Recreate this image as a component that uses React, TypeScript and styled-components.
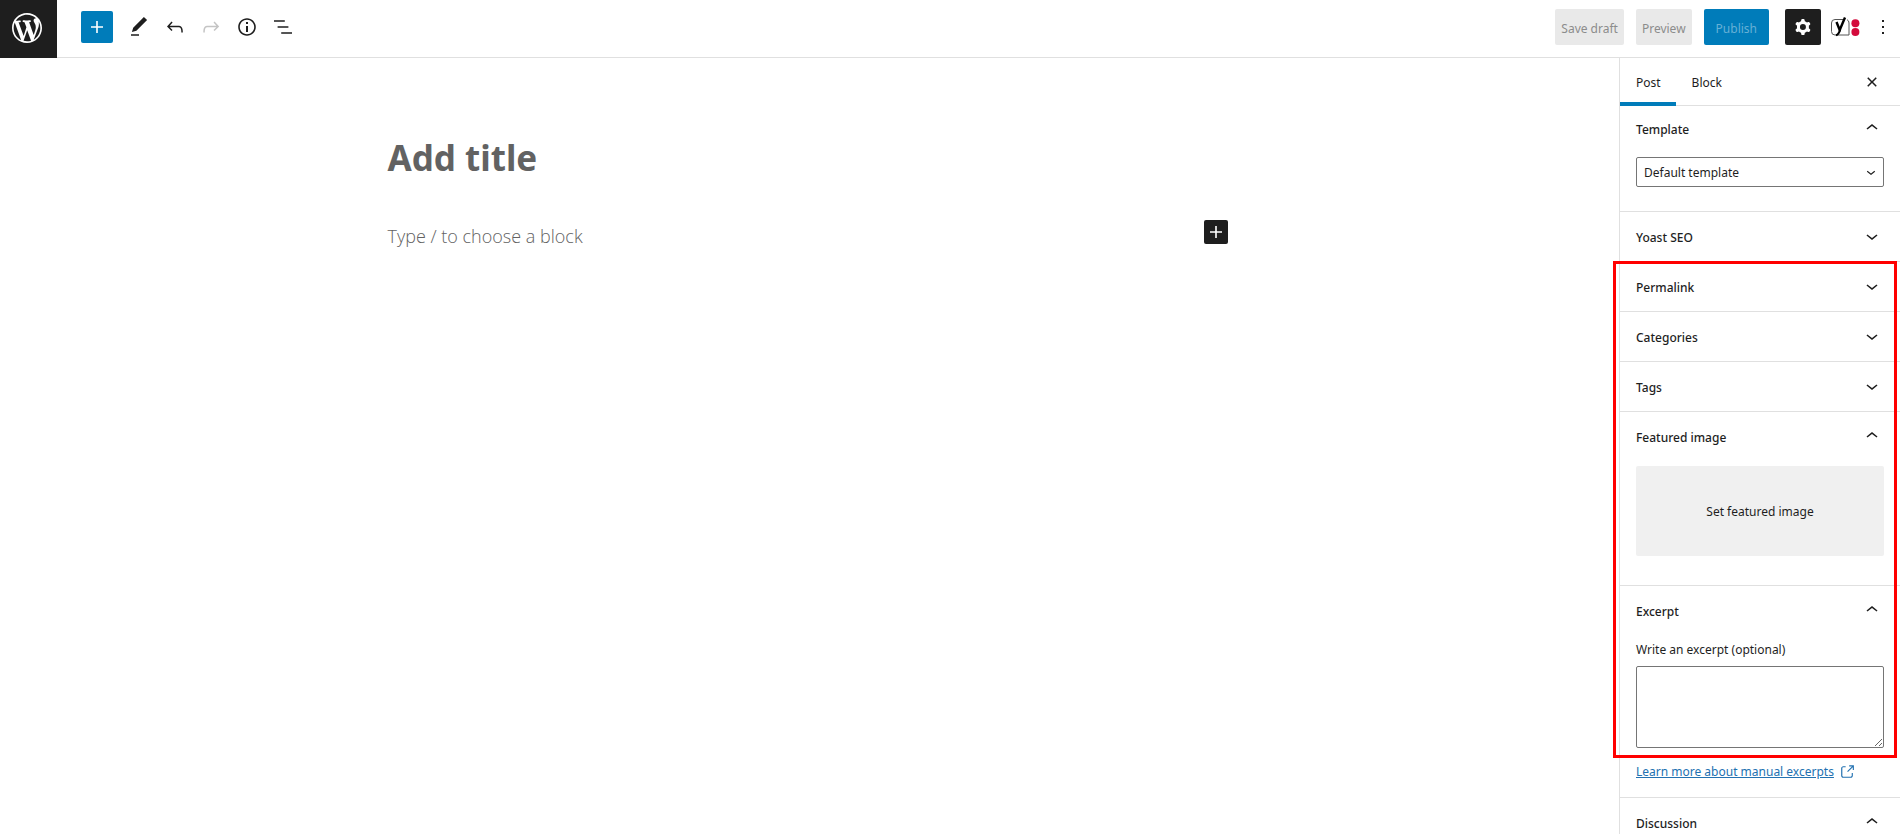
import React from 'react';
import styled, { createGlobalStyle, css } from 'styled-components';

const GlobalStyle = createGlobalStyle`
  *, *::before, *::after { box-sizing: border-box; }
  body { margin: 0; background: #fff; color: #1e1e1e; }
  body, button, select, textarea, input {
    font-family: 'Noto Sans', 'Open Sans', sans-serif;
    font-size: 12px;
    line-height: 16px;
  }
`;

const blue = '#007cba';
const line = '#e0e0e0';

const icons = {
  plus: 'M18 11.2h-5.2V6h-1.6v5.2H6v1.6h5.2V18h1.6v-5.2H18z',
  edit: 'M20.1 5.1L16.9 2 6.2 12.7l-1.3 4.4 4.5-1.3L20.1 5.1zM4 20.8h8v-1.5H4v1.5z',
  undo: 'M18.3 11.7c-.6-.6-1.4-.9-2.3-.9H6.7l2.9-3.3-1.1-1-4.5 5L8.5 16l1-1-2.7-2.7H16c.5 0 .9.2 1.3.5 1 1 1 3.4 1 4.5v.3h1.5v-.2c0-1.5 0-4.3-1.5-5.7z',
  redo: 'M15.6 6.5l-1.1 1 2.9 3.3H8c-.9 0-1.7.3-2.3.9-1.4 1.5-1.4 4.2-1.4 5.6v.2h1.5v-.3c0-1.1 0-3.5 1-4.5.3-.3.7-.5 1.3-.5h9.2L14.5 15l1.1 1.1 4.6-4.6-4.6-5z',
  info: 'M12 3.2c-4.8 0-8.8 3.9-8.8 8.8 0 4.8 3.9 8.8 8.8 8.8 4.8 0 8.8-3.9 8.8-8.8 0-4.8-4-8.8-8.8-8.8zm0 16c-4 0-7.2-3.3-7.2-7.2C4.8 8 8 4.8 12 4.8s7.2 3.3 7.2 7.2c0 4-3.2 7.2-7.2 7.2zM11 17h2v-6h-2v6zm0-8h2V7h-2v2z',
  list: 'M13.8 5.2H3v1.5h10.8V5.2zm-3.6 12v1.5H21v-1.5H10.2zm7.2-6H6.6v1.5h10.8v-1.5z',
  cog: 'M10.289 4.836A1 1 0 0111.275 4h1.306a1 1 0 01.987.836l.244 1.466c.787.26 1.503.679 2.108 1.218l1.393-.522a1 1 0 011.216.437l.653 1.13a1 1 0 01-.23 1.273l-1.148.944a6.025 6.025 0 010 2.435l1.149.946a1 1 0 01.23 1.272l-.653 1.13a1 1 0 01-1.216.437l-1.394-.522c-.605.54-1.32.958-2.108 1.218l-.244 1.466a1 1 0 01-.987.836h-1.306a1 1 0 01-.986-.836l-.244-1.466a5.995 5.995 0 01-2.108-1.218l-1.394.522a1 1 0 01-1.217-.436l-.653-1.131a1 1 0 01.23-1.272l1.149-.946a6.026 6.026 0 010-2.435l-1.148-.944a1 1 0 01-.23-1.272l.653-1.131a1 1 0 011.217-.437l1.393.522a5.994 5.994 0 012.108-1.218l.244-1.466zM14.929 12a3 3 0 11-6 0 3 3 0 016 0z',
  more: 'M13 19h-2v-2h2v2zm0-6h-2v-2h2v2zm0-6h-2V5h2v2z',
  close: 'M12 13.06l3.712 3.713 1.061-1.06L13.061 12l3.712-3.712-1.06-1.06L12 10.938 8.288 7.227l-1.061 1.06L10.939 12l-3.712 3.712 1.06 1.061L12 13.061z',
  up: 'M6.5 12.4L12 8l5.5 4.4-.9 1.2L12 10l-4.5 3.6-1-1.2z',
  down: 'M17.5 11.6L12 16l-5.5-4.4.9-1.2L12 14l4.5-3.6 1 1.2z',
  external: 'M18.2 17c0 .7-.6 1.2-1.2 1.2H7c-.7 0-1.2-.6-1.2-1.2V7c0-.7.6-1.2 1.2-1.2h3.2V4.2H7C5.5 4.2 4.2 5.5 4.2 7v10c0 1.5 1.2 2.8 2.8 2.8h10c1.5 0 2.8-1.2 2.8-2.8v-3.6h-1.5V17zM14.9 3v1.5h3.7l-6.4 6.4 1.1 1.1 6.4-6.4v3.7h1.5V3h-6.3z',
};

const Icon = ({ name, size = 24 }: { name: keyof typeof icons; size?: number }) => (
  <svg width={size} height={size} viewBox="0 0 24 24" fill="currentColor" fillRule="evenodd" aria-hidden="true">
    <path d={icons[name]} />
  </svg>
);

const WordPressLogo = () => (
  <svg width="30" height="30" viewBox="0 0 20 20" fill="currentColor" aria-hidden="true">
    <path d="M20 10c0-5.51-4.49-10-10-10C4.48 0 0 4.49 0 10c0 5.52 4.48 10 10 10 5.51 0 10-4.48 10-10zM7.78 15.37L4.37 6.22c.55-.02 1.17-.08 1.17-.08.5-.06.44-1.13-.06-1.11 0 0-1.45.11-2.37.11-.18 0-.37 0-.58-.01C4.12 2.69 6.87 1.11 10 1.11c2.33 0 4.45.87 6.05 2.34-.68-.11-1.65.39-1.65 1.58 0 .74.45 1.36.9 2.1.35.61.55 1.36.55 2.46 0 1.49-1.4 5-1.4 5l-3.03-8.37c.54-.02.82-.17.82-.17.5-.05.44-1.25-.06-1.22 0 0-1.44.12-2.38.12-.87 0-2.33-.12-2.33-.12-.5-.03-.56 1.2-.06 1.22l.92.08 1.26 3.41zM17.41 10c.24-.64.74-1.87.43-4.25.7 1.29 1.05 2.71 1.05 4.25 0 3.29-1.73 6.24-4.4 7.78.97-2.59 1.94-5.2 2.92-7.78zM6.1 18.09C3.12 16.65 1.11 13.53 1.11 10c0-1.3.23-2.48.72-3.59C3.25 10.3 4.67 14.2 6.1 18.09zm4.03-6.63l2.58 6.98c-.86.29-1.76.45-2.71.45-.79 0-1.57-.11-2.29-.33.81-2.38 1.62-4.74 2.42-7.1z" />
  </svg>
);

const YoastLogo = () => (
  <svg width="30" height="20" viewBox="0 0 30 20" aria-hidden="true">
    <path d="M13.5 2.500H5Q1.500 2.500 1.500 6V14.500Q1.500 18 5 18H19V6Q19 3.500 17 2.700" fill="#fff" stroke="#555" strokeWidth="1" />
    <path d="M6.500 5l3.200 8L15 0.500" fill="none" stroke="#000" strokeWidth="2.400" />
    <path d="M10.200 12Q9 17.500 6 18.300" fill="none" stroke="#000" strokeWidth="2" />
    <circle cx="25.400" cy="6.200" r="4" fill="#d40a3c" />
    <circle cx="25.400" cy="15" r="4" fill="#d40a3c" />
  </svg>
);

const Page = styled.div`
  display: flex;
  flex-direction: column;
  height: 100vh;
  overflow: hidden;
`;

const Header = styled.header`
  display: flex;
  flex: none;
  justify-content: space-between;
  border-bottom: 1px solid ${line};
`;

const Tools = styled.div`
  display: flex;
`;

const HomeLink = styled.a`
  display: flex;
  align-items: center;
  justify-content: center;
  width: 57px;
  height: 58px;
  margin-bottom: -1px;
  padding: 0 3px 2px 0;
  background: #1e1e1e;
  color: #fff;
`;

const ToolRow = styled.div`
  display: flex;
  align-items: center;
  padding: 9px 24px 12px;
`;

const IconButton = styled.button<{ $dark?: boolean }>`
  display: flex;
  align-items: center;
  justify-content: center;
  width: 36px;
  height: 36px;
  padding: 0;
  border: 0;
  border-radius: 2px;
  background: ${(p) => (p.$dark ? '#1e1e1e' : 'transparent')};
  color: ${(p) => (p.$dark ? '#fff' : '#1e1e1e')};
  &:disabled { color: #c4c4c4; }
`;

const Inserter = styled(IconButton)`
  width: 32px;
  height: 32px;
  margin-right: 8px;
  background: ${blue};
  color: #fff;
`;

const BlockInserter = styled(IconButton)`
  width: 24px;
  height: 24px;
`;

const Actions = styled.div`
  display: flex;
  align-items: center;
  gap: 12px;
  padding: 9px 0 12px;
`;

const ActionButton = styled.button<{ $primary?: boolean }>`
  height: 36px;
  padding: 3px ${(p) => (p.$primary ? 12 : 6)}px 0;
  border: 0;
  border-radius: 2px;
  background: #e9e9e9;
  color: #8c8c8c;
  ${(p) => p.$primary && css`
    background: ${blue};
    color: #66b0d6;
  `}
`;

const PluginButtons = styled.div`
  display: flex;
  align-items: center;
  margin-left: 4px;
`;

const YoastButton = styled(IconButton)`
  width: 48px;
`;

const MoreButton = styled(IconButton)`
  width: 28px;
  margin-right: 3px;
`;

const Workspace = styled.div`
  display: flex;
  flex: 1;
  min-height: 0;
`;

const Canvas = styled.main`
  flex: 1;
  min-width: 0;
  padding: 72px 28px 24px 24px;
`;

const Post = styled.div`
  width: 100%;
  max-width: 840px;
  margin: 0 auto;
`;

const Title = styled.h1`
  margin: 0 0 34px;
  color: #626262;
  font-size: 35px;
  font-weight: 700;
  line-height: 56px;
`;

const BlockRow = styled.div`
  display: flex;
  align-items: flex-start;
  justify-content: space-between;
`;

const Prompt = styled.p`
  margin: 0;
  color: #626262;
  font-family: 'Open Sans', 'Noto Sans', sans-serif;
  font-size: 18px;
  font-weight: 300;
  line-height: 32px;
`;

const Sidebar = styled.aside`
  flex: none;
  width: 281px;
  border-left: 1px solid ${line};
`;

const Tabs = styled.div`
  display: flex;
  height: 48px;
  border-bottom: 1px solid ${line};
`;

const Tab = styled.button<{ $active?: boolean }>`
  height: 48px;
  padding: 2px 15px 0 16px;
  border: 0;
  background: none;
  color: #1e1e1e;
  box-shadow: ${(p) => (p.$active ? `inset 0 -4px ${blue}` : 'none')};
`;

const CloseButton = styled(IconButton)`
  width: 24px;
  height: 48px;
  margin: 0 16px 0 auto;
`;

const Section = styled.section<{ $first?: boolean }>`
  margin-top: ${(p) => (p.$first ? -2 : 0)}px;
  border-bottom: 1px solid ${line};
`;

const SectionHeading = styled.h2`
  margin: 0;
`;

const SectionToggle = styled.button`
  display: flex;
  align-items: center;
  justify-content: space-between;
  width: 100%;
  height: 49px;
  padding: 2px 16px 0;
  border: 0;
  background: none;
  color: #1e1e1e;
  font-weight: 500;
  & > svg { margin-bottom: 4px; }
`;

const SectionBody = styled.div`
  display: flex;
  flex-direction: column;
  padding: 4px 16px 24px;
`;

const SelectBox = styled.div`
  display: grid;
  align-items: center;
  color: #1e1e1e;
  & > * { grid-area: 1 / 1; }
  & > svg { justify-self: end; margin-right: 4px; pointer-events: none; }
`;

const Select = styled.select`
  width: 100%;
  height: 30px;
  padding: 1px 24px 0 7px;
  border: 1px solid #757575;
  border-radius: 2px;
  appearance: none;
  background: #fff;
  color: #1e1e1e;
`;

const ImageButton = styled.button`
  height: 90px;
  margin: 1px 0 5px;
  padding: 2px 0 0;
  border: 0;
  border-radius: 2px;
  background: #f0f0f0;
  color: #1e1e1e;
`;

const Label = styled.label`
  margin: 3px 0 8px;
`;

const Excerpt = styled.textarea`
  height: 82px;
  margin-bottom: 15px;
  border: 1px solid #757575;
  border-radius: 2px;
  resize: vertical;
`;

const HelpLink = styled.a`
  display: flex;
  align-items: center;
  gap: 4px;
  height: 18px;
  margin-bottom: -8px;
  color: #2271b1;
  text-decoration: underline;
`;

const Marked = styled.div`
  position: relative;
`;

const Highlight = styled.div`
  position: absolute;
  inset: -1px 3px 40px -7px;
  border: 3px solid #f00;
  pointer-events: none;
`;

const Panel = ({ title, first, children }: { title: string; first?: boolean; children?: React.ReactNode }) => (
  <Section $first={first}>
    <SectionHeading>
      <SectionToggle type="button" aria-expanded={!!children}>
        {title}
        <Icon name={children ? 'up' : 'down'} />
      </SectionToggle>
    </SectionHeading>
    {children && <SectionBody>{children}</SectionBody>}
  </Section>
);

export default function App() {
  return (
    <Page>
      <GlobalStyle />
      <Header>
        <Tools>
          <HomeLink href="#" aria-label="View posts"><WordPressLogo /></HomeLink>
          <ToolRow>
            <Inserter aria-label="Add block"><Icon name="plus" /></Inserter>
            <IconButton aria-label="Tools"><Icon name="edit" /></IconButton>
            <IconButton aria-label="Undo"><Icon name="undo" /></IconButton>
            <IconButton aria-label="Redo" disabled><Icon name="redo" /></IconButton>
            <IconButton aria-label="Details"><Icon name="info" /></IconButton>
            <IconButton aria-label="List view"><Icon name="list" /></IconButton>
          </ToolRow>
        </Tools>
        <Actions>
          <ActionButton>Save draft</ActionButton>
          <ActionButton>Preview</ActionButton>
          <ActionButton $primary>Publish</ActionButton>
          <PluginButtons>
            <IconButton $dark aria-label="Settings"><Icon name="cog" /></IconButton>
            <YoastButton aria-label="Yoast SEO"><YoastLogo /></YoastButton>
            <MoreButton aria-label="Options"><Icon name="more" /></MoreButton>
          </PluginButtons>
        </Actions>
      </Header>
      <Workspace>
        <Canvas>
          <Post>
            <Title>Add title</Title>
            <BlockRow>
              <Prompt>Type / to choose a block</Prompt>
              <BlockInserter $dark aria-label="Add block"><Icon name="plus" /></BlockInserter>
            </BlockRow>
          </Post>
        </Canvas>
        <Sidebar>
          <Tabs>
            <Tab $active>Post</Tab>
            <Tab>Block</Tab>
            <CloseButton aria-label="Close settings"><Icon name="close" /></CloseButton>
          </Tabs>
          <Panel title="Template" first>
            <SelectBox>
              <Select aria-label="Template"><option>Default template</option></Select>
              <Icon name="down" size={18} />
            </SelectBox>
          </Panel>
          <Panel title="Yoast SEO" />
          <Marked>
            <Panel title="Permalink" />
            <Panel title="Categories" />
            <Panel title="Tags" />
            <Panel title="Featured image">
              <ImageButton>Set featured image</ImageButton>
            </Panel>
            <Panel title="Excerpt">
              <Label htmlFor="excerpt">Write an excerpt (optional)</Label>
              <Excerpt id="excerpt" />
              <HelpLink href="#">Learn more about manual excerpts<Icon name="external" size={18} /></HelpLink>
            </Panel>
            <Highlight />
          </Marked>
          <Panel title="Discussion"><span /></Panel>
        </Sidebar>
      </Workspace>
    </Page>
  );
}
